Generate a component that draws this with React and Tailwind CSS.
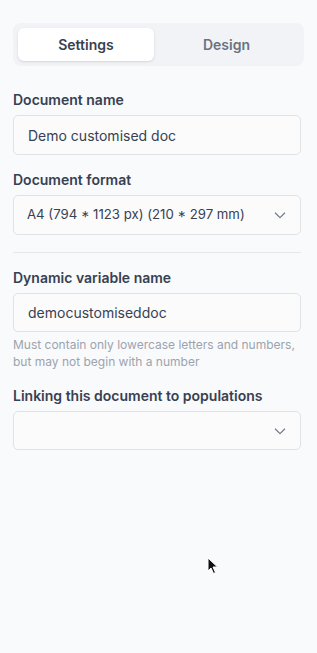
import React from "react";

const Chevron = () => (
  <svg width="16" height="16" viewBox="0 0 24 24" fill="none" stroke="#6b7280" strokeWidth="1.6" strokeLinecap="round" strokeLinejoin="round">
    <path d="M5 9l7 7 7-7" />
  </svg>
);

const Label = ({ children }) => (
  <div className="text-[14px] font-semibold text-[#374151] leading-5 mb-[5px]">{children}</div>
);

const App = () => {
  return (
    <div
      className="relative w-[317px] h-[653px] bg-[#f9fafb] px-[13px] pt-[23px] overflow-hidden"
      style={{ fontFamily: "Inter, 'Noto Sans', sans-serif" }}
    >
      <div className="flex bg-[#f1f3f6] rounded-lg p-[5px] w-[291px] h-[43px]">
        <div className="w-[136px] flex items-center justify-center bg-white rounded-md shadow-sm text-[14px] font-semibold text-[#374151]">
          Settings
        </div>
        <div className="flex-1 flex items-center justify-center text-[14px] font-semibold text-[#6b7280]">
          Design
        </div>
      </div>

      <div className="mt-[24px]">
        <Label>Document name</Label>
        <div className="h-[40px] w-[288px] border border-[#dfe2e6] rounded-[5px] bg-[#fbfbfc] flex items-center px-[14px] text-[14px] text-[#374151]">
          Demo customised doc
        </div>
      </div>

      <div className="mt-[15px]">
        <Label>Document format</Label>
        <div className="h-[40px] w-[288px] border border-[#dfe2e6] rounded-[5px] bg-[#fbfbfc] flex items-center justify-between pl-[13px] pr-[12px] text-[13.2px] text-[#374151]">
          <span>A4 (794 * 1123 px) (210 * 297 mm)</span>
          <Chevron />
        </div>
      </div>

      <div className="w-[288px] h-px bg-[#e5e7eb] mt-[17px]" />

      <div className="mt-[15px]">
        <Label>Dynamic variable name</Label>
        <div className="h-[39px] w-[288px] border border-[#dfe2e6] rounded-[5px] bg-[#fbfbfc] flex items-center px-[14px] text-[14px] text-[#374151]">
          democustomiseddoc
        </div>
        <p className="mt-[4px] text-[12px] leading-[17px] text-[#9ca3af] w-[290px]">
          Must contain only lowercase letters and numbers, but may not begin with a number
        </p>
      </div>

      <div className="mt-[16px]">
        <Label>Linking this document to populations</Label>
        <div className="h-[39px] w-[288px] border border-[#dfe2e6] rounded-[5px] bg-[#fbfbfc] flex items-center justify-end pr-[12px]">
          <Chevron />
        </div>
      </div>

      <svg className="absolute left-[207px] top-[557px]" width="12" height="18" viewBox="0 0 12 18">
        <path d="M1 1 L1 14 L4 11 L6.5 16.5 L8.5 15.5 L6 10 L10.5 10 Z" fill="#111" stroke="#fff" strokeWidth="1" />
      </svg>
    </div>
  );
};

export default App;
